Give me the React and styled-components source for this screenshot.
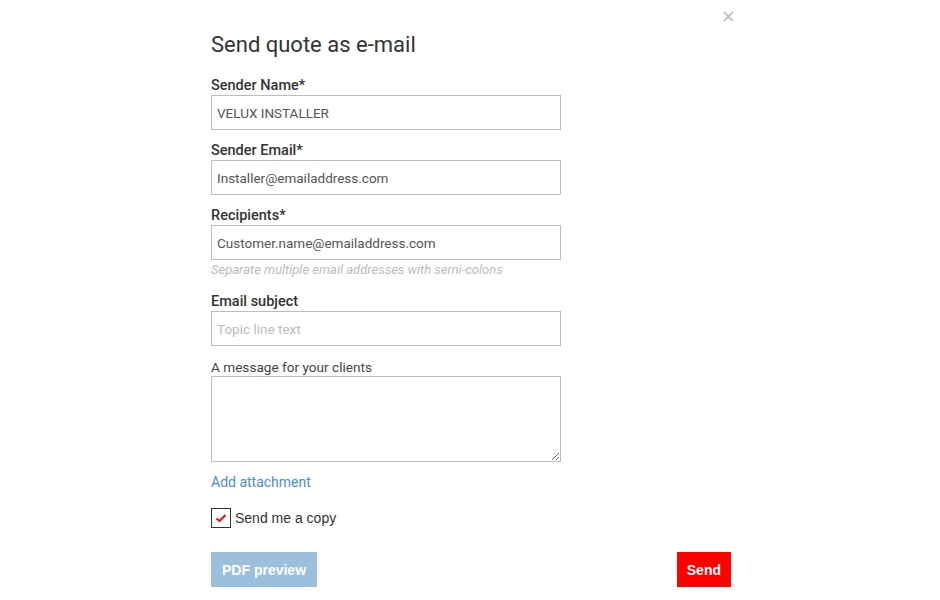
import React from "react";
import styled, { createGlobalStyle } from "styled-components";

const Global = createGlobalStyle`
  html, body { margin: 0; padding: 0; background: #fff; }
  body { font-family: Roboto, "Liberation Sans", sans-serif; color: #333; }
  * { box-sizing: border-box; }
`;

const Dialog = styled.div`
  position: relative;
  width: 560px;
  margin: 0 auto;
  padding: 31px 19px 12px 21px;
`;

const Close = styled.button`
  position: absolute;
  top: 8px;
  right: 14px;
  width: 16px;
  height: 16px;
  padding: 0;
  border: 0;
  background: none;
  cursor: pointer;
  display: flex;
  align-items: center;
  justify-content: center;
`;

const Title = styled.h2`
  margin: 0 0 18px;
  font-size: 22px;
  line-height: 28px;
  font-weight: 400;
  color: #333;
`;

const Field = styled.div`
  display: flex;
  flex-direction: column;
  width: 350px;
  margin-bottom: ${(p) => p.$gap ?? 12}px;
`;

const Label = styled.label`
  display: block;
  font-size: ${(p) => (p.$light ? 13.6 : 14.5)}px;
  line-height: 18px;
  font-weight: ${(p) => (p.$light ? 400 : 500)};
  color: ${(p) => (p.$light ? "#444" : "#333")};
`;

const Input = styled.input`
  display: block;
  width: 350px;
  height: 35px;
  margin: 0;
  padding: 0 5px;
  border: 1px solid #bdbdbd;
  border-radius: 0;
  font-family: Roboto, "Liberation Sans", sans-serif;
  font-size: 13.5px;
  color: #555;
  outline: none;
  &::placeholder { color: #bbb; }
`;

const TextArea = styled.textarea`
  display: block;
  width: 350px;
  height: 86px;
  margin: 0;
  padding: 6px;
  border: 1px solid #bdbdbd;
  border-radius: 0;
  font-family: Roboto, "Liberation Sans", sans-serif;
  font-size: 13.5px;
  color: #555;
  outline: none;
`;

const Hint = styled.div`
  margin-top: 2px;
  font-size: 13px;
  line-height: 16px;
  font-style: italic;
  color: #bbb;
`;

const LinkText = styled.a`
  display: block;
  font-size: 14px;
  line-height: 18px;
  color: #4a8fcc;
  text-decoration: none;
  margin-bottom: 17px;
  cursor: pointer;
`;

const CheckRow = styled.label`
  display: flex;
  align-items: center;
  gap: 4px;
  font-family: "Liberation Sans", Arial, sans-serif;
  font-size: 14px;
  color: #333;
  cursor: pointer;
`;

const Box = styled.span`
  width: 20px;
  height: 20px;
  border: 1px solid #333;
  display: flex;
  align-items: center;
  justify-content: center;
  background: #fff;
`;

const Actions = styled.div`
  display: flex;
  justify-content: space-between;
  margin-top: 24px;
`;

const Button = styled.button`
  height: 35px;
  padding: 0 ${(p) => p.$pad}px;
  border: 0;
  border-radius: 0;
  background: ${(p) => p.$bg};
  color: #fff;
  font-family: "Liberation Sans", Arial, sans-serif;
  font-weight: 700;
  font-size: 14px;
  cursor: pointer;
`;

export default function App() {
  return (
    <>
      <Global />
      <Dialog>
        <Close aria-label="Close">
          <svg width="11" height="11" viewBox="0 0 11 11">
            <path d="M1 1L10 10M10 1L1 10" stroke="#b5b5b5" strokeWidth="1.6" />
          </svg>
        </Close>
        <Title>Send quote as e-mail</Title>

        <Field>
          <Label>Sender Name*</Label>
          <Input defaultValue="VELUX INSTALLER" />
        </Field>
        <Field>
          <Label>Sender Email*</Label>
          <Input defaultValue="Installer@emailaddress.com" />
        </Field>
        <Field $gap={15}>
          <Label>Recipients*</Label>
          <Input defaultValue="Customer.name@emailaddress.com" />
          <Hint>Separate multiple email addresses with semi-colons</Hint>
        </Field>
        <Field>
          <Label>Email subject</Label>
          <Input placeholder="Topic line text" />
        </Field>
        <Field $gap={11}>
          <Label $light>A message for your clients</Label>
          <TextArea />
        </Field>
        <LinkText>Add attachment</LinkText>
        <CheckRow>
          <Box>
            <svg width="12" height="10" viewBox="0 0 12 10">
              <path d="M1.5 5.5L4.5 8L10.5 2" stroke="#e8141c" strokeWidth="2.2" fill="none" />
            </svg>
          </Box>
          Send me a copy
        </CheckRow>
        <Actions>
          <Button $bg="#9bbfdd" $pad={11}>PDF preview</Button>
          <Button $bg="#ff0000" $pad={10}>Send</Button>
        </Actions>
      </Dialog>
    </>
  );
}
